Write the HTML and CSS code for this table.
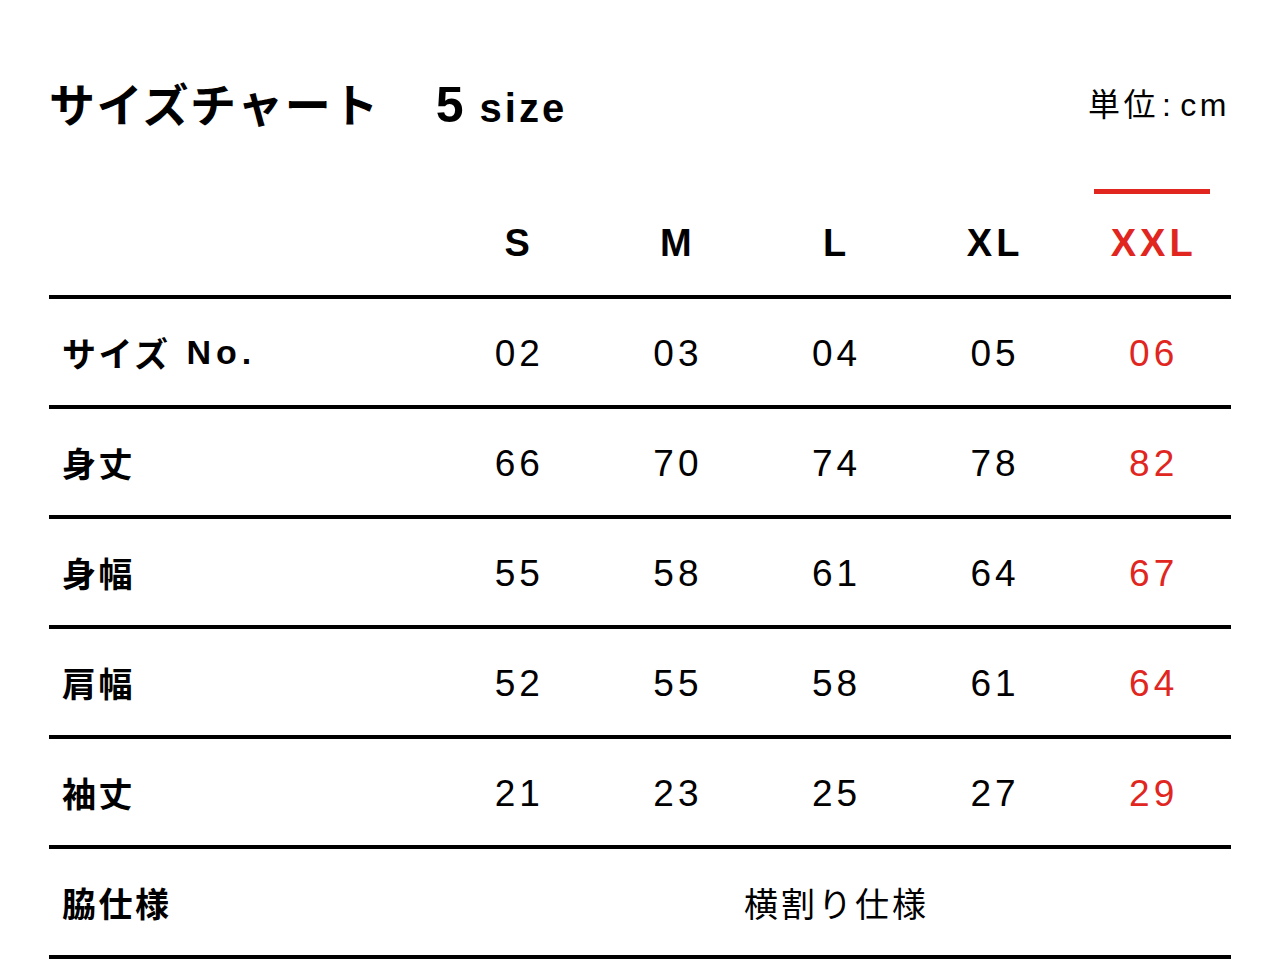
FILE: index.html
```html
<!DOCTYPE html>
<html lang="ja">
<head>
<meta charset="utf-8">
<title>サイズチャート</title>
<link rel="stylesheet" href="styles.css">
</head>
<body>
<div class="page">
  <div class="head">
    <h1 class="title">サイズチャート<span class="count"><span class="num">5</span> size</span></h1>
    <div class="unit">単位<span class="colon">:</span>cm</div>
  </div>
  <div class="chart">
    <div class="cell hcell label"></div>
    <div class="cell hcell">S</div>
    <div class="cell hcell">M</div>
    <div class="cell hcell">L</div>
    <div class="cell hcell">XL</div>
    <div class="cell hcell hot">XXL</div>

    <div class="cell label">サイズ<span class="no">No.</span></div>
    <div class="cell val">02</div>
    <div class="cell val">03</div>
    <div class="cell val">04</div>
    <div class="cell val">05</div>
    <div class="cell val red">06</div>

    <div class="cell label">身丈</div>
    <div class="cell val">66</div>
    <div class="cell val">70</div>
    <div class="cell val">74</div>
    <div class="cell val">78</div>
    <div class="cell val red">82</div>

    <div class="cell label">身幅</div>
    <div class="cell val">55</div>
    <div class="cell val">58</div>
    <div class="cell val">61</div>
    <div class="cell val">64</div>
    <div class="cell val red">67</div>

    <div class="cell label">肩幅</div>
    <div class="cell val">52</div>
    <div class="cell val">55</div>
    <div class="cell val">58</div>
    <div class="cell val">61</div>
    <div class="cell val red">64</div>

    <div class="cell label">袖丈</div>
    <div class="cell val">21</div>
    <div class="cell val">23</div>
    <div class="cell val">25</div>
    <div class="cell val">27</div>
    <div class="cell val red">29</div>

    <div class="cell label">脇仕様</div>
    <div class="cell val span">横割り仕様</div>
  </div>
</div>
</body>
</html>
```

FILE: styles.css
```css
html, body {
  margin: 0;
  padding: 0;
  background: #fff;
}
body {
  font-family: "Liberation Sans", "Noto Sans CJK JP", sans-serif;
  color: #000;
}
.page {
  padding: 80px 49px 0 49px;
}
.head {
  display: flex;
  justify-content: space-between;
  align-items: center;
  height: 50px;
  margin-bottom: 50px;
}
.title {
  margin: 0;
  font-size: 46px;
  line-height: 50px;
  font-weight: 700;
  letter-spacing: 1.5px;
  font-family: "Noto Sans CJK JP", sans-serif;
  display: flex;
  align-items: baseline;
}
.count {
  margin-left: 56px;
  font-family: "Liberation Sans", sans-serif;
  font-size: 40px;
  letter-spacing: 3px;
}
.count .num {
  font-size: 50px;
  letter-spacing: 0;
  margin-right: 2px;
}
.unit {
  font-size: 32px;
  line-height: 50px;
  letter-spacing: 3.5px;
  margin-right: 1px;
}
.colon {
  margin: 0 6px 0 3px;
}
.chart {
  display: grid;
  grid-template-columns: 389px repeat(5, 1fr);
}
.cell {
  height: 106px;
  border-bottom: 4px solid #000;
  display: flex;
  align-items: center;
  justify-content: center;
}
.hcell {
  height: 115px;
  flex-direction: column;
  justify-content: flex-start;
  font-size: 38px;
  font-weight: 700;
  letter-spacing: 4px;
  text-indent: 4px;
  line-height: 40px;
}
.hcell::before {
  content: "";
  display: block;
  width: 116px;
  height: 5px;
  margin-top: 9px;
  margin-bottom: 29px;
  background: transparent;
}
.hcell.label::before {
  width: 0;
}
.hot {
  color: #e0261f;
}
.hot::before {
  background: #e0261f;
}
.label {
  justify-content: flex-start;
  padding-left: 13px;
  font-size: 34px;
  font-weight: 700;
  letter-spacing: 2.5px;
}
.label .no {
  margin-left: 16px;
  letter-spacing: 5px;
}
.hcell.label {
  height: 115px;
}
.val {
  font-size: 37px;
  letter-spacing: 4px;
  text-indent: 4px;
  padding-top: 3px;
  height: 103px;
}
.red {
  color: #e0261f;
}
.span {
  grid-column: 2 / -1;
  font-family: "Noto Sans CJK JP", sans-serif;
  font-size: 34px;
  letter-spacing: 3px;
  padding-top: 0;
  height: 106px;
}
```
